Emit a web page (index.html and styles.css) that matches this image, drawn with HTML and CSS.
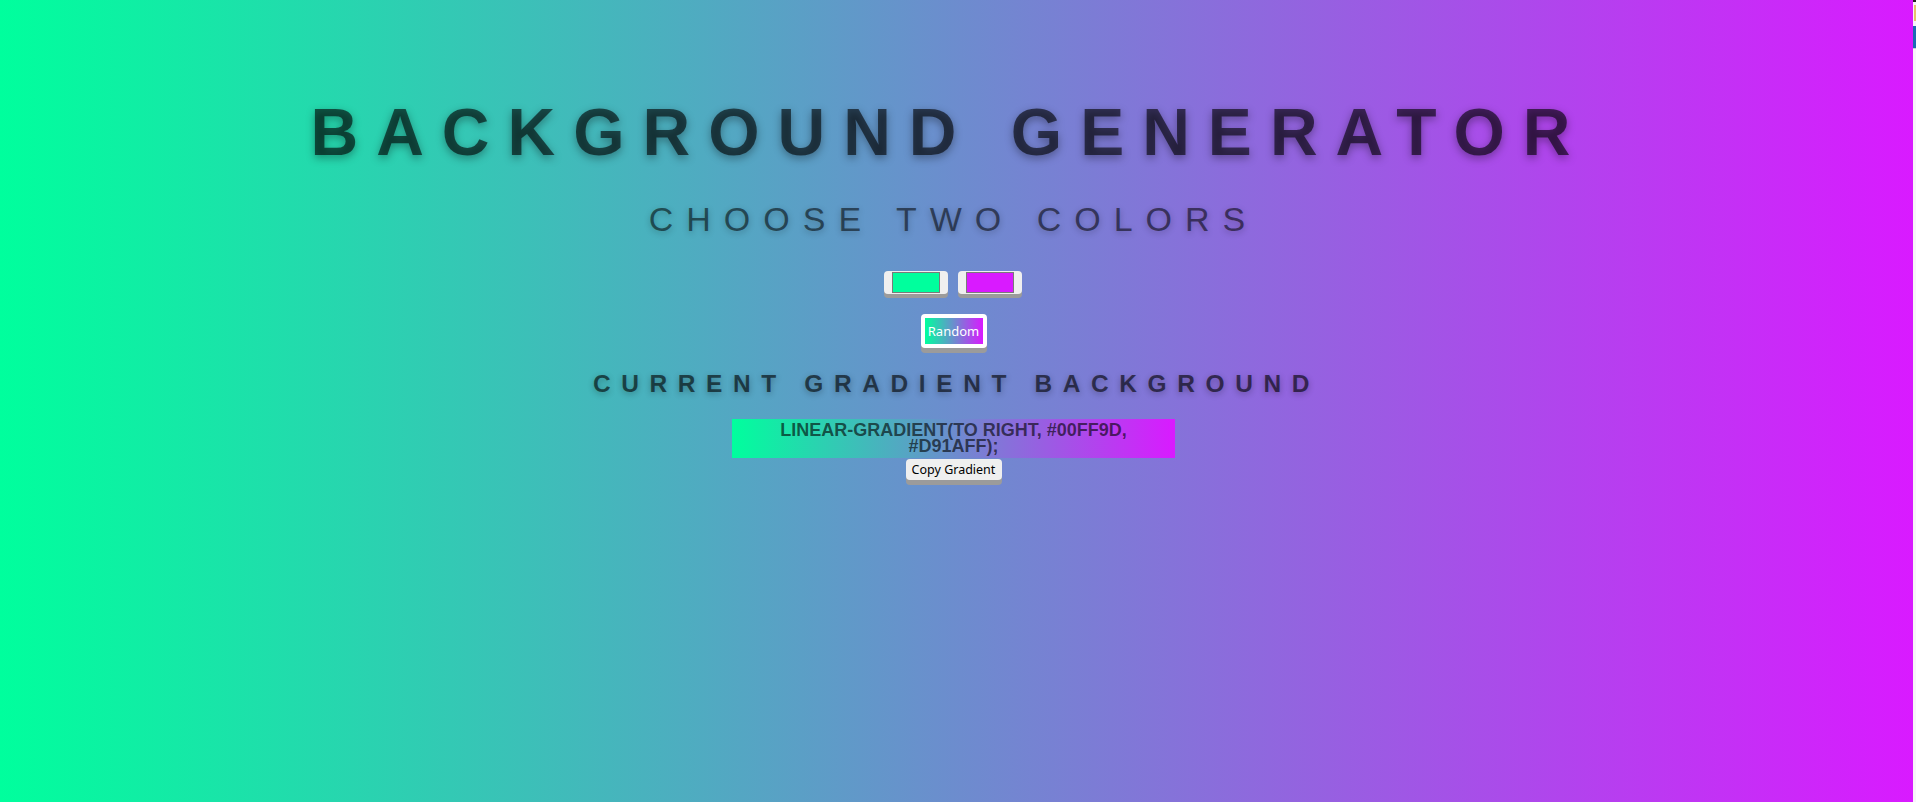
FILE: index.html
```html
<!DOCTYPE html>
<html lang="en">
<head>
<meta charset="utf-8">
<title>Background Generator</title>
<link rel="stylesheet" href="styles.css">
</head>
<body>
<div class="screen">
  <main class="page">
    <h1 class="title">BACKGROUND GENERATOR</h1>
    <h2 class="subtitle">CHOOSE TWO COLORS</h2>
    <div class="pickers">
      <input class="picker" type="color" value="#00ff9d" aria-label="First color">
      <input class="picker" type="color" value="#d91aff" aria-label="Second color">
    </div>
    <button class="random" type="button"><span class="random-face">Random</span></button>
    <h3 class="current">CURRENT GRADIENT BACKGROUND</h3>
    <div class="output">linear-gradient(to right, #00ff9d, #d91aff);</div>
    <button class="copy" type="button">Copy Gradient</button>
  </main>
  <aside class="edge">
    <span class="edge-top"></span>
    <span class="edge-yellow"></span>
    <span class="edge-blue"></span>
  </aside>
</div>
</body>
</html>
```
FILE: styles.css
```css
* { box-sizing: border-box; }
html, body { margin: 0; padding: 0; height: 100%; }
body { background: #f6f6f8; font-family: "Liberation Sans", Arial, sans-serif; }

.screen {
  display: flex;
  height: 100%;
}

.page {
  flex: 1;
  display: flex;
  flex-direction: column;
  align-items: center;
  padding: 94px 6px 0 0;
  background: linear-gradient(to right, #00ff9d, #d91aff);
  color: rgba(0, 0, 0, 0.6);
}

.title {
  margin: 0 0 0 -8px;
  font-size: 66px;
  line-height: 76px;
  font-weight: bold;
  letter-spacing: 18px;
  text-shadow: 0 3px 8px rgba(0, 0, 0, 0.35);
}

.subtitle {
  margin: 29px 0 0;
  font-size: 34px;
  line-height: 41px;
  font-weight: normal;
  letter-spacing: 13px;
  color: rgba(0, 0, 0, 0.55);
  text-shadow: 0 2px 6px rgba(0, 0, 0, 0.25);
}

.pickers {
  margin: 31px 2px 0 0;
  display: flex;
  gap: 10px;
}

.picker {
  -webkit-appearance: none;
  appearance: none;
  width: 64px;
  height: 23px;
  padding: 1px 8px;
  margin: 0;
  border: none;
  border-radius: 4px;
  background: #efefef;
  box-shadow: 0 4px 0 #9b9b9b;
  cursor: pointer;
}
.picker::-webkit-color-swatch-wrapper { padding: 0; }
.picker::-webkit-color-swatch { border: 1px solid #7a7a7a; border-radius: 0; }

.random {
  margin-top: 20px;
  padding: 4px;
  border: none;
  border-radius: 4px;
  background: #fff;
  box-shadow: 0 5px 0 #9b9b9b;
  cursor: pointer;
}
.random-face {
  display: block;
  width: 58px;
  height: 26px;
  line-height: 27px;
  background: linear-gradient(to right, #00ff9d, #d91aff);
  color: #fff;
  font-family: "Noto Sans", "Open Sans", sans-serif;
  font-size: 13px;
}

.current {
  margin: 21px 0 0 6px;
  font-size: 24.5px;
  line-height: 29px;
  font-weight: bold;
  letter-spacing: 10.6px;
  text-shadow: 0 2px 6px rgba(0, 0, 0, 0.3);
}

.output {
  margin-top: 21px;
  width: 443px;
  padding: 4px 2px;
  background: linear-gradient(to right, #00ff9d, #d91aff);
  font-size: 18px;
  line-height: 15.5px;
  font-weight: bold;
  text-transform: uppercase;
  text-align: center;
  color: rgba(0, 0, 0, 0.62);
}

.copy {
  margin-top: 1px;
  width: 96px;
  height: 21px;
  padding: 0;
  border: none;
  border-radius: 4px;
  background: #efefef;
  box-shadow: 0 5px 0 #9b9b9b;
  color: #000;
  font-family: "Noto Sans", "Open Sans", sans-serif;
  font-size: 12.5px;
  cursor: pointer;
}

.edge {
  width: 3px;
  display: flex;
  flex-direction: column;
  background: #f6f6f8;
}
.edge-top { height: 2px; background: #222; }
.edge-yellow { height: 16px; margin-top: 3px; margin-left: 1px; width: 2px; background: #e6c36a; }
.edge-blue { height: 23px; margin-top: 5px; background: #1d6bb3; border-bottom: 1px solid #c8ccd6; }
```
